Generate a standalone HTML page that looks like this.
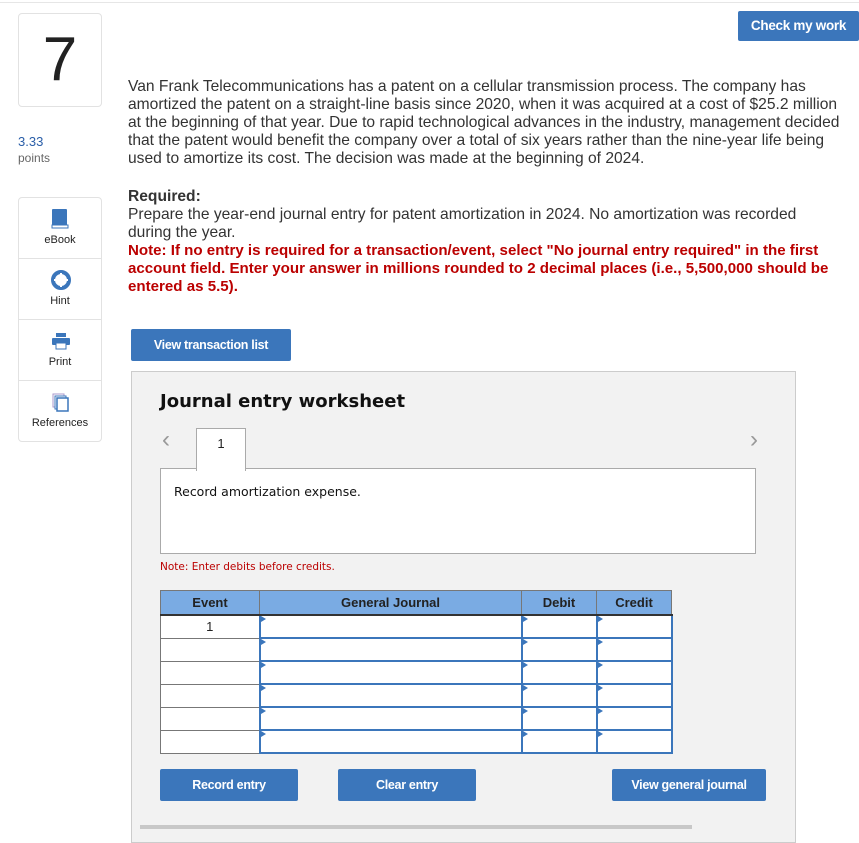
<!DOCTYPE html>
<html><head><meta charset="utf-8"><style>
body{margin:0;width:859px;height:829px;position:relative;overflow:hidden;background:#fff;font-family:"Liberation Sans",Arial,sans-serif;color:#222}
.a{position:absolute}
.btn{position:absolute;background:#3b76bb;color:#fff;font-weight:bold;font-size:12.5px;text-align:center;border-radius:2px;letter-spacing:-0.3px}
.p{font-size:15.6px;line-height:18px;color:#333;white-space:nowrap}
.red{color:#b00;font-weight:bold;font-size:15.1px}
table{border-collapse:collapse;position:absolute;left:160px;top:590px;font-size:13px}
td,th{border:1px solid #777;padding:0;height:21px;background:#fff}
th{background:#7aabe3;font-weight:bold;color:#222;height:23px;border-bottom:2px solid #333}
td.i{border:2px solid #3b76bb;position:relative;background:#fff}
td.i:before{content:"";position:absolute;left:0;top:0;border-left:5px solid #3b76bb;border-top:3px solid transparent;border-bottom:3px solid transparent}
.side{position:absolute;left:18px;width:82px;border:1px solid #e2e2e2;border-radius:4px}
.cell{height:60px;border-bottom:1px solid #e2e2e2;text-align:center;font-size:11px;color:#222;position:relative}
</style></head><body>
<div class="a" style="left:0;top:2px;width:859px;height:1px;background:#e6e6e6"></div>
<div class="side" style="top:13px;height:92px;text-align:center;font-size:62px;line-height:92px;color:#222">7</div>
<div class="a" style="left:18px;top:134px;font-size:13px;color:#2a5ea8">3.33</div>
<div class="a" style="left:18px;top:151px;font-size:12px;color:#666">points</div>
<div class="side" style="top:197px;height:243px">
<div class="cell"><svg class="a" style="left:32px;top:10px" width="18" height="22"><rect x="1" y="1" width="15" height="18" rx="1" fill="#3b76bb"/><rect x="1" y="17" width="16" height="3" fill="#fff" stroke="#3b76bb"/></svg><div class="a" style="left:0;right:0;top:36px">eBook</div></div>
<div class="cell"><svg class="a" style="left:32px;top:11px" width="20" height="20"><circle cx="10" cy="10" r="8" fill="none" stroke="#3b76bb" stroke-width="4"/><circle cx="10" cy="10" r="3.5" fill="#fff"/><path d="M3 10H17M10 3V17" stroke="#fff" stroke-width="2"/></svg><div class="a" style="left:0;right:0;top:36px">Hint</div></div>
<div class="cell"><svg class="a" style="left:32px;top:12px" width="20" height="20"><rect x="5" y="1" width="10" height="4" fill="#3b76bb"/><rect x="1" y="6" width="18" height="7" rx="1" fill="#3b76bb"/><rect x="5" y="11" width="10" height="6" fill="#fff" stroke="#3b76bb"/></svg><div class="a" style="left:0;right:0;top:36px">Print</div></div>
<div class="cell" style="border:none"><svg class="a" style="left:33px;top:12px" width="18" height="20"><rect x="1" y="1" width="11" height="13" fill="#fff" stroke="#a9c"/><rect x="3" y="3" width="11" height="13" fill="#fff" stroke="#3b76bb"/><rect x="5" y="5" width="11" height="13" fill="#fff" stroke="#3b76bb" stroke-width="1.5"/></svg><div class="a" style="left:0;right:0;top:36px">References</div></div>
</div>
<div class="btn" style="left:738px;top:11px;width:121px;height:30px;line-height:30px;font-size:13.5px">Check my work</div>
<div class="a p" style="left:128px;top:78px">Van Frank Telecommunications has a patent on a cellular transmission process. The company has<br>amortized the patent on a straight-line basis since 2020, when it was acquired at a cost of $25.2 million<br>at the beginning of that year. Due to rapid technological advances in the industry, management decided<br>that the patent would benefit the company over a total of six years rather than the nine-year life being<br>used to amortize its cost. The decision was made at the beginning of 2024.</div>
<div class="a p" style="left:128px;top:188px"><b>Required:</b><br>Prepare the year-end journal entry for patent amortization in 2024. No amortization was recorded<br>during the year.<br><span class="red">Note: If no entry is required for a transaction/event, select "No journal entry required" in the first<br>account field. Enter your answer in millions rounded to 2 decimal places (i.e., 5,500,000 should be<br>entered as 5.5).</span></div>
<div class="btn" style="left:131px;top:329px;width:160px;height:32px;line-height:32px">View transaction list</div>
<div class="a" style="left:131px;top:371px;width:663px;height:470px;background:#f2f2f2;border:1px solid #ccc"></div>
<div class="a" style="left:160px;top:391px;font-family:'DejaVu Sans',sans-serif;font-weight:bold;font-size:18px;color:#111">Journal entry worksheet</div>
<div class="a" style="left:162px;top:426px;font-size:24px;color:#999">&#8249;</div>
<div class="a" style="left:750px;top:426px;font-size:24px;color:#999">&#8250;</div>
<div class="a" style="left:160px;top:468px;width:594px;height:84px;background:#fff;border:1px solid #aaa"></div>
<div class="a" style="left:196px;top:428px;width:48px;height:42px;background:#fff;border:1px solid #aaa;border-bottom:none;text-align:center;line-height:30px;font-size:13px">1</div>
<div class="a" style="left:174px;top:484px;font-family:'DejaVu Sans',sans-serif;font-size:12.5px;color:#111">Record amortization expense.</div>
<div class="a" style="left:160px;top:561px;font-family:'DejaVu Sans',sans-serif;font-size:10.5px;color:#b00">Note: Enter debits before credits.</div>
<table>
<tr><th style="width:98px">Event</th><th style="width:261px">General Journal</th><th style="width:74px">Debit</th><th style="width:74px">Credit</th></tr>
<tr><td style="text-align:center">1</td><td class="i"></td><td class="i"></td><td class="i"></td></tr>
<tr><td></td><td class="i"></td><td class="i"></td><td class="i"></td></tr>
<tr><td></td><td class="i"></td><td class="i"></td><td class="i"></td></tr>
<tr><td></td><td class="i"></td><td class="i"></td><td class="i"></td></tr>
<tr><td></td><td class="i"></td><td class="i"></td><td class="i"></td></tr>
<tr><td></td><td class="i"></td><td class="i"></td><td class="i"></td></tr>
</table>
<div class="btn" style="left:160px;top:769px;width:138px;height:32px;line-height:32px">Record entry</div>
<div class="btn" style="left:338px;top:769px;width:138px;height:32px;line-height:32px">Clear entry</div>
<div class="btn" style="left:612px;top:769px;width:154px;height:32px;line-height:32px">View general journal</div>
<div class="a" style="left:140px;top:825px;width:552px;height:4px;background:#c8c8c8"></div>
</body></html>
